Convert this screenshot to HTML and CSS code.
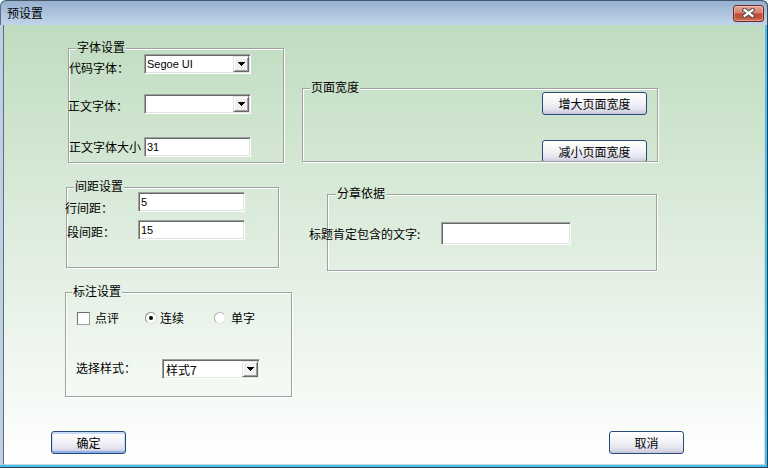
FILE: index.html
```html
<!DOCTYPE html>
<html lang="zh-CN">
<head>
  <meta charset="UTF-8" />
  <title>预设置</title>
  <link rel="stylesheet" href="styles.css">
</head>
<body>
  <div class="window">
    <!-- title bar -->
    <div class="titlebar">
      <span class="title">预设置</span>
      <span class="close-btn">
        <svg width="13" height="10" viewBox="0 0 13 10">
          <path d="M2.5 2L10.5 8M10.5 2L2.5 8" stroke="#4b4b4b" stroke-width="4.2" stroke-linecap="square" />
          <path d="M2.5 2L10.5 8M10.5 2L2.5 8" stroke="#fff" stroke-width="2.2" stroke-linecap="square" />
        </svg>
      </span>
    </div>

    <div class="frame">
      <div class="client">
        <div class="panes">
          <div class="col-left">

            <!-- 字体设置 -->
            <div class="group group-font">
              <span class="legend">字体设置</span>
              <div class="row">
                <span class="lbl font-lbl lbl-code">代码字体：</span>
                <div class="combo combo-font">
                  <span class="combo-text">Segoe UI</span>
                  <span class="drop"><svg width="7" height="4" viewBox="0 0 7 4"><path d="M0 0H7V1H6V2H5V3H4V4H3V3H2V2H1V1H0Z" /></svg></span>
                </div>
              </div>
              <div class="row row-body">
                <span class="lbl font-lbl lbl-body">正文字体：</span>
                <div class="combo combo-font">
                  <span class="drop"><svg width="7" height="4" viewBox="0 0 7 4"><path d="M0 0H7V1H6V2H5V3H4V4H3V3H2V2H1V1H0Z" /></svg></span>
                </div>
              </div>
              <div class="row row-size">
                <span class="lbl font-lbl lbl-size">正文字体大小</span>
                <div class="textbox textbox-font">31</div>
              </div>
            </div>

            <!-- 间距设置 -->
            <div class="group group-spacing">
              <span class="legend">间距设置</span>
              <div class="row">
                <span class="lbl spacing-lbl lbl-line">行间距：</span>
                <div class="textbox textbox-spacing">5</div>
              </div>
              <div class="row row-para">
                <span class="lbl spacing-lbl lbl-para">段间距：</span>
                <div class="textbox textbox-spacing">15</div>
              </div>
            </div>

            <!-- 标注设置 -->
            <div class="group group-mark">
              <span class="legend legend-mark">标注设置</span>
              <div class="options">
                <label class="opt opt-comment"><span class="check"></span><span>点评</span></label>
                <label class="opt opt-cont"><span class="radio on"></span><span>连续</span></label>
                <label class="opt opt-single"><span class="radio"></span><span>单字</span></label>
              </div>
              <div class="row row-style">
                <span class="lbl lbl-style">选择样式：</span>
                <div class="combo combo-style">
                  <span class="combo-text combo-cjk">样式7</span>
                  <span class="drop"><svg width="7" height="4" viewBox="0 0 7 4"><path d="M0 0H7V1H6V2H5V3H4V4H3V3H2V2H1V1H0Z" /></svg></span>
                </div>
              </div>
            </div>
          </div>

          <div class="col-right">
            <!-- 页面宽度 -->
            <div class="group group-width">
              <span class="legend">页面宽度</span>
              <div class="btn-stack">
                <span class="btn btn-width">增大页面宽度</span>
                <span class="btn btn-width btn-shrink">减小页面宽度</span>
              </div>
            </div>

            <!-- 分章依据 -->
            <div class="group group-chapter">
              <span class="legend legend-chapter">分章依据</span>
              <div class="row row-chapter">
                <span class="lbl lbl-chapter">标题肯定包含的文字:</span>
                <div class="textbox textbox-chapter"></div>
              </div>
            </div>
          </div>
        </div>

        <div class="footer">
          <span class="btn btn-footer btn-default">确定</span>
          <span class="btn btn-footer">取消</span>
        </div>
      </div>
    </div>
  </div>
</body>
</html>
```

FILE: styles.css
```css
body {
  margin: 0;
  font-family: "Noto Sans CJK SC", "Liberation Sans", sans-serif;
  font-size: 12px;
  color: #000;
}

.window {
  width: 768px;
  height: 468px;
  display: flex;
  flex-direction: column;
  background: #40c3ea;
  box-shadow: inset -1px -1px 0 #2d3e4f;
  border-radius: 6px 6px 0 0;
  overflow: hidden;
}

/* title bar */
.titlebar {
  height: 25px;
  box-sizing: border-box;
  display: flex;
  align-items: center;
  justify-content: space-between;
  padding: 0 4px 0 7px;
  border-top: 1px solid #48596d;
  border-radius: 6px 6px 0 0;
  background: linear-gradient(#98b1d1, #c1d4ea);
  box-shadow: inset 1px 0 0 #5d6f86, inset -1px 0 0 #3a4b5d;
}

.title {
  line-height: 14px;
}

.close-btn {
  width: 31px;
  height: 17px;
  box-sizing: border-box;
  display: flex;
  align-items: center;
  justify-content: center;
  border: 1px solid #6a2a25;
  border-radius: 3px;
  background: linear-gradient(#e3a597 0%, #d7826f 45%, #c14a34 52%, #c4523b 78%, #d57a5f 100%);
  box-shadow: inset 0 0 0 1px rgba(255,255,255,0.3);
}

/* frame + client area */
.frame {
  flex: 1;
  display: flex;
  padding: 0 3px 3px 3px;
  background: linear-gradient(#bfcfe4, #bfcfe4) no-repeat 0 0 / 3px calc(100% - 3px);
}

.client {
  flex: 1;
  display: flex;
  flex-direction: column;
  border-left: 1px solid #5b6c80;
  border-right: 1px solid #cfd6dc;
  border-bottom: 1px solid #cfd6dc;
  background: linear-gradient(#c0dcc0 25px, #fff 464px) fixed;
}

.panes {
  display: flex;
}

.col-left {
  width: 298px;
  display: flex;
  flex-direction: column;
  align-items: flex-start;
}

.col-right {
  display: flex;
  flex-direction: column;
  align-items: flex-start;
}

/* group boxes */
.group {
  position: relative;
  box-sizing: border-box;
  border: 1px solid #a0a0a0;
  box-shadow: 1px 1px 0 #fff, inset 1px 1px 0 #fff;
}

.legend {
  position: absolute;
  top: -9px;
  left: 7px;
  padding: 0 1px;
  line-height: 14px;
  white-space: nowrap;
  background: linear-gradient(#c0dcc0 25px, #fff 464px) fixed;
}

.legend-mark {
  left: 6px;
}

.legend-chapter {
  left: 8px;
}

.group-font {
  width: 216px;
  height: 115px;
  margin: 23px 0 0 64px;
  padding-top: 5px;
}

.group-spacing {
  width: 213px;
  height: 81px;
  margin: 24px 0 0 62px;
  padding-top: 4px;
}

.group-mark {
  width: 227px;
  height: 105px;
  margin: 24px 0 0 61px;
  padding-top: 18px;
}

.group-width {
  width: 356px;
  height: 74px;
  margin-top: 63px;
}

.group-chapter {
  width: 330px;
  height: 77px;
  margin: 32px 0 0 25px;
  padding-top: 27px;
}

/* rows and labels */
.row {
  display: flex;
  align-items: flex-start;
}

.lbl {
  flex: none;
  line-height: 14px;
  white-space: nowrap;
}

.font-lbl {
  width: 75px;
}

.lbl-code {
  margin-top: 7px;
}

.row-body {
  margin-top: 19px;
}

.lbl-body {
  margin-top: 5px;
  margin-left: -1px;
  width: 76px;
}

.row-size {
  margin-top: 23px;
}

.lbl-size {
  margin-top: 3px;
}

.spacing-lbl {
  width: 71px;
}

.lbl-line {
  margin-top: 9px;
  margin-left: -2px;
  width: 73px;
}

.row-para {
  margin-top: 5px;
}

.lbl-para {
  margin-top: 5px;
}

.row-style {
  margin-top: 34px;
  padding-left: 10px;
}

.lbl-style {
  width: 86px;
  margin-top: 2px;
}

.row-chapter {
  align-items: center;
  margin-left: -19px;
}

.lbl-chapter {
  width: 132px;
}

/* inputs */
.textbox,
.combo {
  box-sizing: border-box;
  height: 20px;
  display: flex;
  align-items: center;
  background: #fff;
  border: 1px solid;
  border-color: #a0a0a0 #fff #fff #a0a0a0;
  box-shadow: inset 1px 1px 0 #696969, inset -1px -1px 0 #e3e3e3;
  font-family: "Liberation Sans", "Noto Sans CJK SC", sans-serif;
  font-size: 11px;
}

.textbox {
  padding-left: 2px;
}

.textbox-font {
  width: 107px;
}

.textbox-spacing {
  width: 107px;
}

.textbox-chapter {
  width: 130px;
  height: 23px;
}

.combo {
  padding: 1px;
}

.combo-font {
  width: 107px;
}

.combo-style {
  width: 98px;
}

.combo-text {
  padding-left: 1px;
}

.combo-cjk {
  font-family: "Noto Sans CJK SC", sans-serif;
  font-size: 12px;
  padding-left: 2px;
}

.drop {
  width: 16px;
  height: 16px;
  margin-left: auto;
  box-sizing: border-box;
  display: flex;
  align-items: center;
  justify-content: center;
  background: #f0f0f0;
  border: 1px solid;
  border-color: #e3e3e3 #696969 #696969 #e3e3e3;
  box-shadow: inset 1px 1px 0 #fff, inset -1px -1px 0 #a0a0a0;
}

.drop svg {
  fill: #000;
}

/* check + radio */
.options {
  display: flex;
  align-items: center;
  padding-left: 11px;
  height: 14px;
}

.opt {
  display: flex;
  align-items: center;
  line-height: 14px;
}

.opt-comment {
  width: 68px;
  gap: 5px;
}

.opt-cont {
  width: 69px;
  gap: 3px;
}

.opt-single {
  gap: 5px;
}

.check {
  width: 13px;
  height: 13px;
  box-sizing: border-box;
  background: #fff;
  border: 1px solid;
  border-color: #6e6e6e #a0a0a0 #a0a0a0 #6e6e6e;
}

.radio {
  width: 12px;
  height: 12px;
  box-sizing: border-box;
  display: flex;
  align-items: center;
  justify-content: center;
  border-radius: 50%;
  background: #fff;
  border: 1px solid;
  border-color: #b0b0b0 #e2e2e2 #e2e2e2 #b0b0b0;
}

.radio.on {
  border-color: #8a8a8a #dcdcdc #dcdcdc #8a8a8a;
}

.radio.on::after {
  content: "";
  width: 4px;
  height: 4px;
  border-radius: 50%;
  background: #000;
}

/* buttons */
.btn {
  box-sizing: border-box;
  height: 23px;
  display: flex;
  align-items: center;
  justify-content: center;
  padding-top: 1px;
  border: 1px solid #284a7a;
  border-radius: 3px;
  background: linear-gradient(#fff 0%, #f5f5f9 40%, #e5e4ef 75%, #c8c7da 100%);
  line-height: 14px;
}

.btn-stack {
  height: 100%;
  box-sizing: border-box;
  overflow: hidden;
  display: flex;
  flex-direction: column;
  align-items: flex-end;
  padding: 3px 10px 0 0;
}

.btn-width {
  flex: none;
  width: 105px;
}

.btn-shrink {
  margin-top: 25px;
}

.footer {
  display: flex;
  justify-content: space-between;
  margin-top: 34px;
  padding: 0 80px 0 47px;
}

.btn-footer {
  width: 75px;
}

.btn-default {
  box-shadow: inset 0 2px 0 #c4dbfa, inset 0 -2px 0 #8fb0ec, inset 1px 0 0 #c4dbfa, inset -1px 0 0 #c4dbfa;
}
```
